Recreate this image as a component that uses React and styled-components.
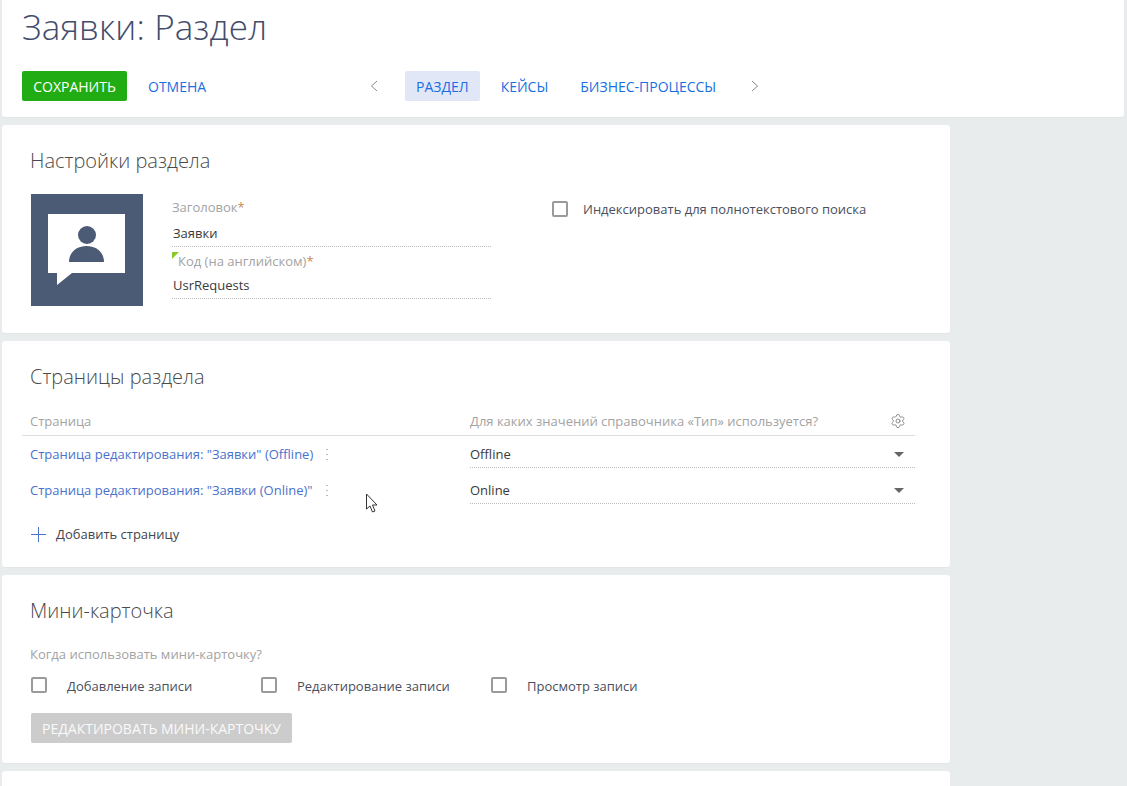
import React from "react";
import styled, { createGlobalStyle } from "styled-components";
import { Settings } from "lucide-react";

const GlobalStyle = createGlobalStyle`
  html, body {
    margin: 0;
    padding: 0;
    background: #e9eced;
    height: 786px;
    overflow: hidden;
  }
  * { box-sizing: border-box; }
  body {
    font-family: "Open Sans", "Liberation Sans", sans-serif;
    font-size: 13px;
    color: #444;
  }
`;

const Page = styled.div`
  position: relative;
  height: 786px;
  overflow: hidden;
  padding: 0 3px 0 2px;
  display: flex;
  flex-direction: column;
  gap: 8px;
`;
const Header = styled.header`
  flex: none;
  height: 117px;
  background: #fff;
  border-radius: 0 0 3px 3px;
  box-shadow: 0 1px 0 #e2e5e6;
  padding: 4px 20px 0;
`;
const PageTitle = styled.h1`
  margin: 0;
  height: 67px;
  font-size: 35px;
  line-height: 46px;
  font-weight: 300;
  letter-spacing: 0.15px;
  color: #444c6b;
`;
const Toolbar = styled.div`
  display: flex;
  align-items: center;
  height: 30px;
`;
const SaveButton = styled.button`
  width: 105px;
  height: 30px;
  padding: 0;
  border: 0;
  border-radius: 2px;
  background: #22ac14;
  color: #fff;
  font: 14px "Open Sans", sans-serif;
`;
const CancelLink = styled.a`
  margin-left: 21px;
  width: 222px;
  color: #1a6fe0;
  font-size: 14px;
`;
const Chevron = styled.svg`
  flex: none;
  width: 8px;
  height: 12px;
  fill: none;
  stroke: #8a8a8a;
  stroke-width: 1;
`;
const Tabs = styled.nav`
  display: flex;
  align-items: center;
  margin: 0 24px 0 27px;
`;
const Tab = styled.a`
  height: 30px;
  line-height: 31px;
  padding: 0 11px;
  margin-right: ${(p) => p.$gap}px;
  border-radius: 2px;
  background: ${(p) => (p.$active ? "#e2e7f8" : "transparent")};
  color: #1a6fe0;
  font-size: 14px;
`;
const Card = styled.section`
  flex: none;
  height: ${(p) => p.$height}px;
  width: 948px;
  background: #fff;
  border-radius: 3px;
  box-shadow: 0 1px 0 #e2e5e6;
  padding: 21px 35px 0 28px;
`;
const CardTitle = styled.h2`
  margin: 0;
  height: 32px;
  font-size: 20px;
  line-height: 30px;
  font-weight: 300;
  color: #4a4a4a;
`;
const SettingsRow = styled.div`
  display: flex;
  margin-top: 16px;
`;
const SectionImage = styled.div`
  flex: none;
  width: 112px;
  height: 112px;
  margin-left: 1px;
  background: #4b5a75;
  display: flex;
  align-items: center;
  justify-content: center;
`;
const Fields = styled.div`
  width: 319px;
  margin-left: 29px;
  padding-top: 4px;
`;
const Field = styled.div`
  height: 54px;
  &:last-child { height: 50px; }
`;
const FieldLabel = styled.div`
  position: relative;
  height: 19px;
  line-height: 19px;
  color: #a3a3a3;
  padding-left: ${(p) => (p.$hint ? 6 : 0)}px;
  span { color: #c98a52; }
`;
const HintMark = styled.i`
  position: absolute;
  left: 0;
  top: 0;
  width: 0;
  height: 0;
  border-top: 7px solid #8ccc2a;
  border-right: 7px solid transparent;
`;
const FieldValue = styled.div`
  height: ${(p) => p.$height}px;
  line-height: ${(p) => p.$line}px;
  padding: ${(p) => p.$pad || 0}px 0 0 1px;
  color: #3a3a3a;
  border-bottom: 1px dotted #bdbdbd;
`;
const CheckRow = styled.label`
  display: flex;
  align-items: center;
  color: #4a4f5e;
  height: 16px;
`;
const IndexCheck = styled(CheckRow)`
  margin: 7px 0 0 61px;
  span { margin-left: 15px; }
`;
const Box = styled.i`
  display: block;
  flex: none;
  width: 16px;
  height: 16px;
  border: 2px solid #9a9a9a;
  border-radius: 2px;
  background: #fff;
`;
const GridRow = styled.div`
  display: grid;
  grid-template-columns: 448px 445px;
  margin-left: -8px;
  width: 893px;
`;
const HeadRow = styled(GridRow)`
  margin-top: 13px;
  height: 29px;
  line-height: 26px;
  border-bottom: 1px solid #dedede;
  color: #a3a3a3;
`;
const HeadCell = styled.div`
  padding-left: ${(p) => (p.$first ? 8 : 0)}px;
  display: flex;
  align-items: center;
  justify-content: space-between;
`;
const GearIcon = styled(Settings)`
  margin-right: 9px;
  color: #777;
`;
const PageRow = styled(GridRow)`
  height: 36px;
`;
const PageCell = styled.div`
  display: flex;
  align-items: center;
  padding: 0 0 0 8px;
  color: #4a72cc;
  white-space: nowrap;
`;
const Dots = styled.i`
  margin-left: ${(p) => p.$gap}px;
  width: 2px;
  height: 14px;
  background: radial-gradient(circle, #bbbbbb 1px, transparent 1px) 0 0 / 2px 5px repeat-y;
`;
const SelectCell = styled.div`
  height: 32px;
  display: flex;
  align-items: center;
  justify-content: space-between;
  padding: 5px 11px 0 0;
  color: #3a3a3a;
  border-bottom: 1px dotted #bdbdbd;
`;
const Caret = styled.i`
  width: 0;
  height: 0;
  border-left: 5px solid transparent;
  border-right: 5px solid transparent;
  border-top: 5px solid #666;
`;
const AddRow = styled.div`
  display: flex;
  align-items: center;
  margin: 10px 0 0 1px;
  height: 32px;
  color: #45454d;
  span { margin-left: 10px; }
`;
const HintText = styled.div`
  margin-top: 17px;
  line-height: 18px;
  color: #a3a3a3;
`;
const CheckGroup = styled.div`
  display: flex;
  margin: 14px 0 0 1px;
`;
const MiniCheck = styled(CheckRow)`
  width: 230px;
  span { margin: 2px 0 0 20px; }
`;
const DisabledButton = styled.button`
  display: block;
  width: 261px;
  height: 30px;
  margin: 20px 0 0 1px;
  padding: 0;
  border: 0;
  border-radius: 2px;
  background: #cccccc;
  color: #fafafa;
  font: 14px "Open Sans", sans-serif;
`;
const Cursor = styled.svg`
  position: absolute;
  left: 365px;
  top: 493px;
  width: 14px;
  height: 21px;
`;

const pages = [
  { name: 'Страница редактирования: "Заявки" (Offline)', type: "Offline", gap: 13 },
  { name: 'Страница редактирования: "Заявки (Online)"', type: "Online", gap: 14 },
];
const miniChecks = ["Добавление записи", "Редактирование записи", "Просмотр записи"];

const App = () => {
  return (
    <Page>
      <GlobalStyle />
      <Header>
        <PageTitle>Заявки: Раздел</PageTitle>
        <Toolbar>
          <SaveButton>СОХРАНИТЬ</SaveButton>
          <CancelLink>ОТМЕНА</CancelLink>
          <Chevron viewBox="0 0 8 12"><path d="M7 1 1.500 6 7 11" /></Chevron>
          <Tabs>
            <Tab $active $gap={10}>РАЗДЕЛ</Tab>
            <Tab $gap={10}>КЕЙСЫ</Tab>
            <Tab $gap={0}>БИЗНЕС-ПРОЦЕССЫ</Tab>
          </Tabs>
          <Chevron viewBox="0 0 8 12"><path d="M1 1l5.500 5L1 11" /></Chevron>
        </Toolbar>
      </Header>

      <Card $height={208}>
        <CardTitle>Настройки раздела</CardTitle>
        <SettingsRow>
          <SectionImage>
            <svg width="78" height="72" viewBox="0 0 78 72">
              <path fill="#fff" d="M0 0h77v59H24L9 71V59H0z" />
              <circle cx="39" cy="21" r="9" fill="#4b5a75" />
              <path fill="#4b5a75" d="M21 48c0-10 8-16 17.500-16S56 38 56 48z" />
            </svg>
          </SectionImage>
          <Fields>
            <Field>
              <FieldLabel>Заголовок<span>*</span></FieldLabel>
              <FieldValue $height={30} $line={29} $pad={2}>Заявки</FieldValue>
            </Field>
            <Field>
              <FieldLabel $hint><HintMark />Код (на английском)<span>*</span></FieldLabel>
              <FieldValue $height={28} $line={28}>UsrRequests</FieldValue>
            </Field>
          </Fields>
          <IndexCheck>
            <Box />
            <span>Индексировать для полнотекстового поиска</span>
          </IndexCheck>
        </SettingsRow>
      </Card>

      <Card $height={226}>
        <CardTitle>Страницы раздела</CardTitle>
        <HeadRow>
          <HeadCell $first>Страница</HeadCell>
          <HeadCell>
            Для каких значений справочника «Тип» используется?
            <GearIcon size={16} strokeWidth={1.2} />
          </HeadCell>
        </HeadRow>
        {pages.map((page) => (
          <PageRow key={page.type}>
            <PageCell>
              {page.name}
              <Dots $gap={page.gap} />
            </PageCell>
            <SelectCell>
              {page.type}
              <Caret />
            </SelectCell>
          </PageRow>
        ))}
        <AddRow>
          <svg width="15" height="15" viewBox="0 0 15 15" stroke="#4a72cc">
            <path d="M7.500 0v15M0 7.500h15" />
          </svg>
          <span>Добавить страницу</span>
        </AddRow>
      </Card>

      <Card $height={188}>
        <CardTitle>Мини-карточка</CardTitle>
        <HintText>Когда использовать мини-карточку?</HintText>
        <CheckGroup>
          {miniChecks.map((text) => (
            <MiniCheck key={text}>
              <Box />
              <span>{text}</span>
            </MiniCheck>
          ))}
        </CheckGroup>
        <DisabledButton>РЕДАКТИРОВАТЬ МИНИ-КАРТОЧКУ</DisabledButton>
      </Card>

      <Card $height={60} />

      <Cursor viewBox="0 0 14 21">
        <path d="M1.500 1v15l3.500-3 2.500 6 2.500-1-2.500-6h4.500z" fill="#fff" stroke="#333" strokeWidth="1" />
      </Cursor>
    </Page>
  );
};

export default App;
